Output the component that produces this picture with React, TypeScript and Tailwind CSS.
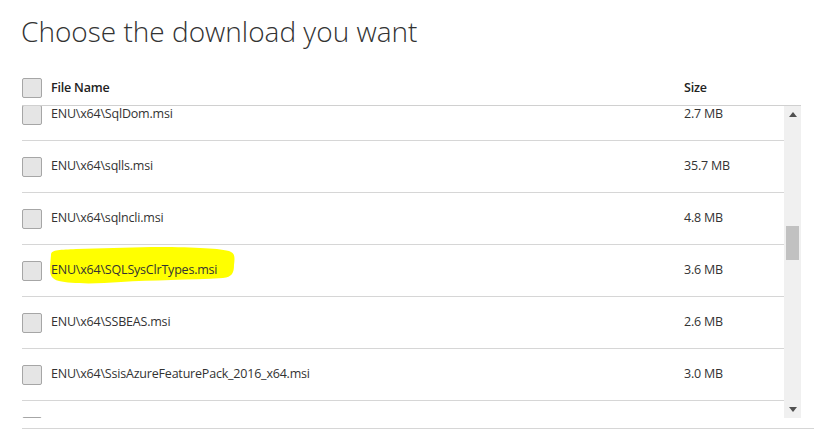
import React from "react";

const files = [
  { name: "ENU\\x64\\SqlDom.msi", size: "2.7 MB" },
  { name: "ENU\\x64\\sqlls.msi", size: "35.7 MB" },
  { name: "ENU\\x64\\sqlncli.msi", size: "4.8 MB" },
  { name: "ENU\\x64\\SQLSysClrTypes.msi", size: "3.6 MB", marked: true },
  { name: "ENU\\x64\\SSBEAS.msi", size: "2.6 MB" },
  { name: "ENU\\x64\\SsisAzureFeaturePack_2016_x64.msi", size: "3.0 MB" },
  { name: "", size: "" },
];

const Box = () => (
  <span className="block w-[20px] h-[20px] shrink-0 rounded-[2px] border border-[#a6a6a6] bg-[#e5e5e5]" />
);

// marker scribble over the highlighted file name
const Highlight = () => (
  <svg
    className="absolute left-[-4px] top-[-18px] pointer-events-none"
    width="200"
    height="50"
    viewBox="46 248 200 50"
  >
    <path
      d="M50,260 C50,254 60,255 75,254 L150,252 C190,252 215,253 228,256 C234,258 234,262 233,270 C233,278 231,282 222,283 C190,285 150,285 120,287 C95,289 70,289 58,286 C50,284 49,280 49,272 Z"
      fill="#ffff00"
    />
  </svg>
);

const Row = ({ name, size, marked }: { name: string; size: string; marked?: boolean }) => (
  <div className="flex items-center h-[52px] border-b border-[#d6d6d6] text-[12.5px] tracking-[-0.2px] text-[#333]">
    <div className="flex items-center w-[662px]">
      <Box />
      <span className="relative ml-[9px]">
        {marked && <Highlight />}
        <span className="relative">{name}</span>
      </span>
    </div>
    <span>{size}</span>
  </div>
);

export default function App() {
  return (
    <div
      className="w-[814px] h-[442px] overflow-hidden bg-white"
      style={{ fontFamily: '"Open Sans", "Noto Sans", sans-serif' }}
    >
      <h1 className="pl-[21px] pt-[11px] h-[69px] text-[28px] leading-[40px] font-light text-[#333]">
        Choose the download you want
      </h1>

      <div className="ml-[22px] w-[779px]">
        {/* Kopfzeile */}
        <div className="flex items-start h-[37px] pt-[9px] border-b border-[#d0d0d0] text-[12.5px] tracking-[-0.2px] text-[#222]">
          <div className="flex items-center w-[662px]">
            <Box />
            <span className="ml-[9px] font-semibold">File Name</span>
          </div>
          <span className="font-semibold leading-[20px]">Size</span>
        </div>

        <div className="flex h-[312px]">
          <div className="flex-1 overflow-hidden">
            <div className="mt-[-17px]">
              {files.map((f, i) => (
                <Row key={i} {...f} />
              ))}
            </div>
          </div>

          {/* Scrollleiste */}
          <div className="flex flex-col items-center w-[17px] bg-[#f0f0f0]">
            <div className="flex items-center justify-center h-[17px] w-full">
              <svg width="8" height="5" viewBox="0 0 8 5">
                <path d="M0 5 L4 0 L8 5 Z" fill="#505050" />
              </svg>
            </div>
            <div className="mt-[103px] w-[13px] h-[34px] bg-[#c1c1c1]" />
            <div className="flex-1" />
            <div className="flex items-center justify-center h-[17px] w-full">
              <svg width="8" height="5" viewBox="0 0 8 5">
                <path d="M0 0 L4 5 L8 0 Z" fill="#505050" />
              </svg>
            </div>
          </div>
        </div>
      </div>

      <div className="ml-[22px] mt-[10px] border-t border-[#d6d6d6]" />
    </div>
  );
}
